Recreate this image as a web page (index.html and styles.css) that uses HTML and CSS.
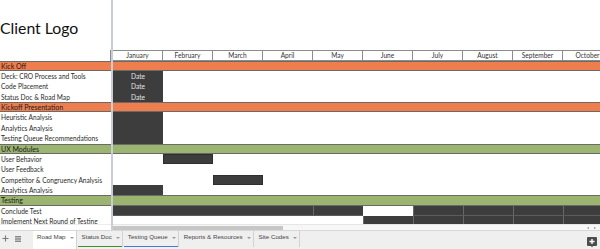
FILE: index.html
```html
<!DOCTYPE html>
<html>
<head>
<meta charset="utf-8">
<link rel="stylesheet" href="styles.css">
</head>
<body>
<div class="app">
  <div class="sheet">
    <div class="frozen">
      <div class="title">Client Logo</div>
      <div class="hdr-left"></div>
      <div class="lrow sec">Kick Off</div>
      <div class="lrow">Deck: CRO Process and Tools</div>
      <div class="lrow">Code Placement</div>
      <div class="lrow">Status Doc &amp; Road Map</div>
      <div class="lrow sec">Kickoff Presentation</div>
      <div class="lrow">Heuristic Analysis</div>
      <div class="lrow">Analytics Analysis</div>
      <div class="lrow">Testing Queue Recommendations</div>
      <div class="lrow sec green">UX Modules</div>
      <div class="lrow">User Behavior</div>
      <div class="lrow">User Feedback</div>
      <div class="lrow">Competitor &amp; Congruency Analysis</div>
      <div class="lrow">Analytics Analysis</div>
      <div class="lrow sec green">Testing</div>
      <div class="lrow">Conclude Test</div>
      <div class="lrow">Implement Next Round of Testing</div>
    </div>
    <div class="divider"></div>
    <div class="timeline">
      <div class="title-space"></div>
      <div class="months">
        <div class="m">January</div>
        <div class="m">February</div>
        <div class="m">March</div>
        <div class="m">April</div>
        <div class="m">May</div>
        <div class="m">June</div>
        <div class="m">July</div>
        <div class="m">August</div>
        <div class="m">September</div>
        <div class="m">October</div>
      </div>
      <div class="tsec"></div>
      <div class="trow"><div class="c bar">Date</div></div>
      <div class="trow"><div class="c bar">Date</div></div>
      <div class="trow"><div class="c bar">Date</div></div>
      <div class="tsec"></div>
      <div class="trow"><div class="c bar"></div></div>
      <div class="trow"><div class="c bar"></div></div>
      <div class="trow"><div class="c bar"></div></div>
      <div class="tsec green"></div>
      <div class="trow"><div class="c"></div><div class="c bar edge"></div></div>
      <div class="trow"></div>
      <div class="trow"><div class="c"></div><div class="c"></div><div class="c bar edge"></div></div>
      <div class="trow"><div class="c bar"></div></div>
      <div class="tsec green"></div>
      <div class="trow">
        <div class="c w200 bar low"></div>
        <div class="c bar sep low"></div>
        <div class="c"></div>
        <div class="c bar sep low"></div>
        <div class="c bar sep low"></div>
        <div class="c bar sep low"></div>
        <div class="c bar sep low"></div>
      </div>
      <div class="trow">
        <div class="c w250"></div>
        <div class="c bar sep"></div>
        <div class="c bar sep"></div>
        <div class="c bar sep"></div>
        <div class="c bar sep"></div>
        <div class="c bar sep"></div>
      </div>
    </div>
  </div>
  <div class="hscroll">
    <div class="hs-left"></div>
    <div class="hs-div"></div>
    <div class="hs-track">
      <div class="thumb"></div>
      <div class="arrows"><span class="al"></span><span class="ar"></span></div>
    </div>
  </div>
  <div class="tabs">
    <div class="tb-icon plus">
      <svg width="7" height="7" viewBox="0 0 7 7"><path d="M3.5 0.5v6M0.5 3.5h6" stroke="#777" stroke-width="1.1" fill="none"/></svg>
    </div>
    <div class="tb-icon list">
      <svg width="6" height="6" viewBox="0 0 6 6"><rect x="0" y="0" width="6" height="1.5" fill="#888"/><rect x="0" y="2.25" width="6" height="1.5" fill="#888"/><rect x="0" y="4.5" width="6" height="1.5" fill="#888"/></svg>
    </div>
    <div class="tab active">Road Map<span class="caret"></span></div>
    <div class="tab ul-green">Status Doc<span class="caret"></span></div>
    <div class="tab ul-blue">Testing Queue<span class="caret"></span></div>
    <div class="tab">Reports &amp; Resources<span class="caret"></span></div>
    <div class="tab">Site Codes<span class="caret"></span></div>
    <div class="explore">
      <svg width="10" height="11" viewBox="0 0 10 11"><rect x="0" y="0" width="10" height="9" rx="1" fill="#4d4d4d"/><path d="M4 9h2l-1 1.6z" fill="#4d4d4d"/><path d="M5 2v5M2.5 4.5h5" stroke="#fff" stroke-width="1.4"/></svg>
    </div>
  </div>
</div>
</body>
</html>
```

FILE: styles.css
```css
html, body {
  margin: 0;
  padding: 0;
}
body {
  width: 600px;
  height: 249px;
  overflow: hidden;
  background: #fff;
}
.app {
  display: flex;
  flex-direction: column;
  width: 600px;
  height: 249px;
}
.sheet {
  display: flex;
  height: 224px;
  flex: none;
  overflow: hidden;
  font-family: Lato, "Liberation Sans", sans-serif;
}
.frozen {
  width: 111px;
  flex: none;
}
.divider {
  width: 2px;
  flex: none;
  background: #cbcdd6;
}
.timeline {
  flex: 1;
  overflow: hidden;
}
.title {
  height: 50px;
  box-sizing: border-box;
  padding-top: 18px;
  font-size: 15.8px;
  line-height: 20px;
  color: #111;
  white-space: nowrap;
}
.title-space {
  height: 50px;
}
.hdr-left {
  height: 10.7px;
  box-sizing: border-box;
  border-right: 1px solid #8c8c8c;
}
.months {
  display: flex;
  width: max-content;
  height: 10.7px;
  box-sizing: border-box;
  border-top: 1px solid #8c8c8c;
  border-bottom: 1px solid #8c8c8c;
}
.m {
  width: 50px;
  flex: none;
  box-sizing: border-box;
  border-right: 1px solid #8c8c8c;
  text-align: center;
  font-size: 6.6px;
  line-height: 8.7px;
  color: #333;
}
.lrow {
  height: 10.36px;
  line-height: 10.36px;
  font-size: 6.6px;
  color: #2a2a2a;
  padding-left: 1px;
  white-space: nowrap;
  overflow: hidden;
}
.sec {
  box-sizing: border-box;
  background: #ef7e4e;
  border-top: 1px solid #6a6a6a;
  border-bottom: 1px solid #6a6a6a;
  line-height: 8.36px;
  font-size: 7px;
  color: #1a1a1a;
}
.sec.green {
  background: #9bb46f;
}
.tsec {
  height: 10.36px;
  box-sizing: border-box;
  background: #ef7e4e;
  border-top: 1px solid #6a6a6a;
  border-bottom: 1px solid #6a6a6a;
}
.tsec.green {
  background: #9bb46f;
}
.trow {
  display: flex;
  width: max-content;
  height: 10.36px;
}
.c {
  width: 50px;
  flex: none;
  box-sizing: border-box;
}
.w200 {
  width: 200px;
}
.w250 {
  width: 250px;
}
.bar {
  background: #3d3d3d;
  color: #e4e4e4;
  text-align: center;
  font-size: 6.6px;
  line-height: 10.36px;
}
.edge {
  box-shadow: inset 0 0 0 1px #2e2e2e;
}
.sep {
  box-shadow: inset 1px 0 0 #686868;
}
.low {
  border-bottom: 1px solid #5c5c5c;
}
.hscroll {
  display: flex;
  height: 6px;
  flex: none;
}
.hs-left {
  width: 111px;
  flex: none;
  background: #fff;
  border-top: 1px solid #ececec;
}
.hs-div {
  width: 2px;
  flex: none;
  background: #cbcdd6;
}
.hs-track {
  flex: 1;
  display: flex;
  align-items: center;
  background: #f7f7f7;
  border-top: 1px solid #e6e6e6;
}
.thumb {
  width: 170px;
  height: 4px;
  background: #c6c6c6;
}
.arrows {
  margin-left: auto;
  display: flex;
  gap: 5px;
  padding-right: 4px;
}
.al, .ar {
  width: 0;
  height: 0;
  border-top: 1.5px solid transparent;
  border-bottom: 1.5px solid transparent;
}
.al {
  border-right: 2px solid #888;
}
.ar {
  border-left: 2px solid #888;
}
.tabs {
  display: flex;
  align-items: flex-start;
  height: 19px;
  flex: none;
  box-sizing: border-box;
  background: #efefef;
  border-top: 1px solid #d8d8d8;
  font-family: "Liberation Sans", Arial, sans-serif;
  font-size: 6.2px;
  color: #444;
}
.tb-icon {
  display: flex;
  margin-top: 4px;
}
.plus {
  margin-left: 2px;
}
.list {
  margin-left: 6px;
  margin-top: 4.5px;
  margin-right: 12px;
}
.tab {
  display: flex;
  align-items: flex-start;
  gap: 4px;
  height: 16px;
  box-sizing: border-box;
  padding: 2px 2px 0 4px;
  line-height: 8px;
  border-right: 1px solid #d2d2d2;
  margin-right: 1px;
  white-space: nowrap;
}
.tab.active {
  background: #fff;
  height: 18px;
}
.ul-green {
  box-shadow: inset 0 -1px 0 #3f8f2a;
}
.ul-blue {
  box-shadow: inset 0 -1px 0 #3d7be0;
}
.caret {
  width: 0;
  height: 0;
  margin-top: 3.5px;
  border-left: 2px solid transparent;
  border-right: 2px solid transparent;
  border-top: 2px solid #999;
}
.explore {
  margin-left: auto;
  margin-right: 3px;
  margin-top: 6px;
  display: flex;
}
```
